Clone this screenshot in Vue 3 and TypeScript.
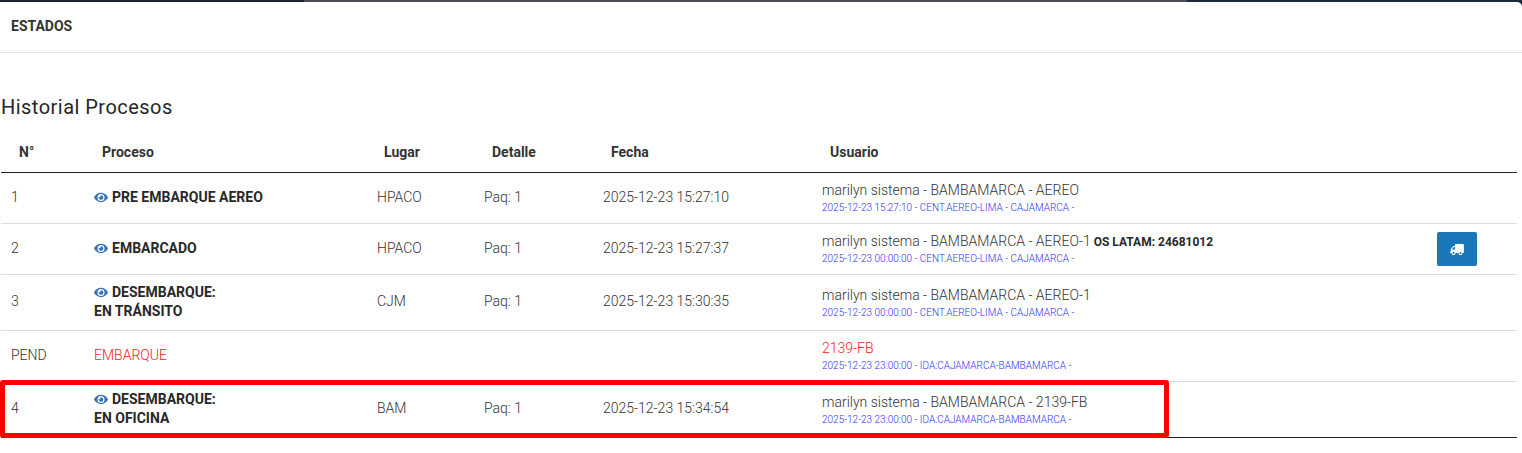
<script setup lang="ts">
interface Row {
  n: string
  proceso: string[]
  eye: boolean
  pending?: boolean
  lugar: string
  detalle: string
  fecha: string
  usuario: string
  extra?: string
  sub: string
  action?: boolean
}
const rows: Row[] = [
  { n: '1', eye: true, proceso: ['PRE EMBARQUE AEREO'], lugar: 'HPACO', detalle: 'Paq: 1', fecha: '2025-12-23 15:27:10', usuario: 'marilyn sistema - BAMBAMARCA - AEREO', sub: '2025-12-23 15:27:10 - CENT.AEREO-LIMA - CAJAMARCA -' },
  { n: '2', eye: true, proceso: ['EMBARCADO'], lugar: 'HPACO', detalle: 'Paq: 1', fecha: '2025-12-23 15:27:37', usuario: 'marilyn sistema - BAMBAMARCA - AEREO-1', extra: 'OS LATAM: 24681012', sub: '2025-12-23 00:00:00 - CENT.AEREO-LIMA - CAJAMARCA -', action: true },
  { n: '3', eye: true, proceso: ['DESEMBARQUE:', 'EN TRÁNSITO'], lugar: 'CJM', detalle: 'Paq: 1', fecha: '2025-12-23 15:30:35', usuario: 'marilyn sistema - BAMBAMARCA - AEREO-1', sub: '2025-12-23 00:00:00 - CENT.AEREO-LIMA - CAJAMARCA -' },
  { n: 'PEND', eye: false, pending: true, proceso: ['EMBARQUE'], lugar: '', detalle: '', fecha: '', usuario: '2139-FB', sub: '2025-12-23 23:00:00 - IDA:CAJAMARCA-BAMBAMARCA -' },
  { n: '4', eye: true, proceso: ['DESEMBARQUE:', 'EN OFICINA'], lugar: 'BAM', detalle: 'Paq: 1', fecha: '2025-12-23 15:34:54', usuario: 'marilyn sistema - BAMBAMARCA - 2139-FB', sub: '2025-12-23 23:00:00 - IDA:CAJAMARCA-BAMBAMARCA -' }
]
</script>

<template>
  <div class="page">
    <div class="modal">
      <header class="modal-head"><h5>ESTADOS</h5></header>
      <section class="modal-body">
        <h4>Historial Procesos</h4>
        <div class="table-wrap">
          <table>
            <colgroup>
              <col class="c1" /><col class="c2" /><col class="c3" /><col class="c4" /><col class="c5" /><col class="c6" /><col class="c7" />
            </colgroup>
            <thead>
              <tr>
                <th>N°</th><th>Proceso</th><th class="th-lugar">Lugar</th><th>Detalle</th><th>Fecha</th><th>Usuario</th><th></th>
              </tr>
            </thead>
            <tbody>
              <tr v-for="r in rows" :key="r.n">
                <td class="plain">{{ r.n }}</td>
                <td :class="r.pending ? 'pending' : 'proc'">
                  <template v-for="(line, i) in r.proceso" :key="i">
                    <svg v-if="r.eye && i === 0" class="eye" viewBox="0 0 576 512" aria-hidden="true">
                      <path d="M572.52 241.4C518.29 135.59 410.93 64 288 64S57.68 135.64 3.48 241.41a32.35 32.35 0 0 0 0 29.19C57.71 376.41 165.07 448 288 448s230.32-71.64 284.52-177.41a32.35 32.35 0 0 0 0-29.19zM288 400a144 144 0 1 1 144-144 143.93 143.93 0 0 1-144 144zm0-240a95.31 95.31 0 0 0-25.31 3.79 47.85 47.85 0 0 1-66.9 66.9A95.78 95.78 0 1 0 288 160z" />
                    </svg>
                    <br v-if="i > 0" />{{ line }}
                  </template>
                </td>
                <td class="plain">{{ r.lugar }}</td>
                <td class="plain">{{ r.detalle }}</td>
                <td class="plain">{{ r.fecha }}</td>
                <td class="usercell">
                  <div class="user" :class="{ pending: r.pending }">{{ r.usuario }}<b v-if="r.extra">{{ r.extra }}</b></div>
                  <div class="sub">{{ r.sub }}</div>
                </td>
                <td>
                  <button v-if="r.action" class="btn" type="button" aria-label="Transporte">
                    <svg viewBox="0 0 640 512" aria-hidden="true">
                      <path d="M624 352h-16V243.900c0-12.700-5.100-24.900-14.100-33.900L494 110.100c-9-9-21.200-14.100-33.900-14.100H416V48c0-26.500-21.500-48-48-48H48C21.500 0 0 21.500 0 48v320c0 26.500 21.500 48 48 48h16c0 53 43 96 96 96s96-43 96-96h128c0 53 43 96 96 96s96-43 96-96h48c8.800 0 16-7.200 16-16v-32c0-8.800-7.200-16-16-16zM160 464c-26.500 0-48-21.500-48-48s21.500-48 48-48 48 21.500 48 48-21.500 48-48 48zm320 0c-26.500 0-48-21.500-48-48s21.500-48 48-48 48 21.500 48 48-21.500 48-48 48zm80-208H416V144h44.100l99.900 99.900V256z" transform="matrix(-1 0 0 1 640 0)" />
                    </svg>
                  </button>
                </td>
              </tr>
            </tbody>
          </table>
          <div class="highlight"></div>
        </div>
      </section>
    </div>
  </div>
</template>

<style scoped>
.page {
  height: 453px;
  overflow: hidden;
  background: linear-gradient(90deg, #1c2233 0 20%, #4a4c55 20% 78%, #1c2a3f 78% 100%);
  padding-top: 2px;
  font-family: Roboto, "Liberation Sans", sans-serif;
  color: #333;
}
.modal {
  height: 451px;
  background: #fff;
  border-top-right-radius: 5px;
}
.modal-head {
  height: 50px;
  border-bottom: 1px solid #e5e5e5;
  box-sizing: content-box;
  display: flex;
  align-items: center;
  padding-left: 11px;
}
h5 {
  margin: 0 0 3px;
  font-size: 14px;
  font-weight: 700;
  color: #333;
}
.modal-body {
  padding: 0 5px 0 1px;
}
h4 {
  margin: 42px 0 0;
  font-size: 20px;
  line-height: 24px;
  font-weight: 400;
  letter-spacing: 0.47px;
  color: #262626;
}
.table-wrap {
  position: relative;
  margin-top: 13px;
}
table {
  width: 1516px;
  table-layout: fixed;
  border-collapse: collapse;
  font-size: 14px;
  border-bottom: 1px solid #222;
}
.c1 { width: 83px; }
.c2 { width: 283px; }
.c3 { width: 107px; }
.c4 { width: 119px; }
.c5 { width: 219px; }
.c6 { width: 615px; }
.c7 { width: 90px; }
th {
  height: 40px;
  padding: 0 0 0 18px;
  text-align: left;
  font-size: 14px;
  font-weight: 700;
  color: #333;
  border-bottom: 1px solid #222;
}
.th-lugar {
  padding-left: 17px;
}
td {
  padding: 7px 10px;
  font-weight: 300;
  color: #333;
  line-height: 19px;
  border-bottom: 1px solid #ddd;
}
td.plain {
  padding: 6px 10px 8px;
}
td.usercell {
  padding: 8px 10px 7px;
}
tbody tr:last-child td {
  border-bottom: 0;
}
td.proc {
  padding: 8px 10px 9px;
  font-weight: 700;
  color: #282828;
}
td.pending {
  padding: 6px 10px 8px;
  color: #ff2020;
}
.user.pending {
  color: #ff2020;
}
.eye {
  width: 14px;
  height: 13px;
  fill: #3a72b8;
  margin-right: 4px;
  vertical-align: -2px;
}
.user {
  line-height: 19px;
}
.user b {
  margin-left: 3px;
  font-size: 12px;
  line-height: 1;
  font-weight: 700;
  color: #282828;
}
.sub {
  font-size: 10px;
  line-height: 16px;
  color: #3030ff;
}
.btn {
  width: 40px;
  height: 34px;
  border: 0;
  border-radius: 2px;
  background: #1a78b8;
  padding: 0;
  display: flex;
  align-items: center;
  justify-content: center;
}
.btn svg {
  width: 14px;
  height: 11px;
  fill: #fff;
}
.highlight {
  position: absolute;
  left: -1px;
  top: 248px;
  width: 1169px;
  height: 58px;
  box-sizing: border-box;
  border: 5px solid #f00;
  border-radius: 3px;
}
</style>

<style>
html, body { margin: 0; background: #fff; }
</style>
